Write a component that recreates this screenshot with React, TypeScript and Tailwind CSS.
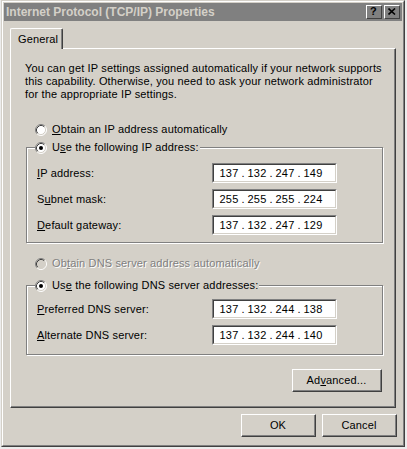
import React from "react";

function U({ children }: { children: React.ReactNode }) {
  return <span className="underline underline-offset-[1px] decoration-1">{children}</span>;
}

function Radio({ checked = false, disabled = false }: { checked?: boolean; disabled?: boolean }) {
  return (
    <svg width="12" height="12" viewBox="0 0 12 12" className="shrink-0">
      <circle cx="6" cy="6" r="5" fill={disabled ? "#d4d0c8" : "#fff"} />
      <path d="M2.11 9.89 A5.5 5.5 0 0 1 9.89 2.11" stroke="#808080" fill="none" />
      <path d="M9.89 2.11 A5.5 5.5 0 0 1 2.11 9.89" stroke="#fff" fill="none" />
      <path d="M2.82 9.18 A4.5 4.5 0 0 1 9.18 2.82" stroke="#404040" fill="none" />
      <path d="M9.18 2.82 A4.5 4.5 0 0 1 2.82 9.18" stroke="#d4d0c8" fill="none" />
      {checked && <circle cx="6" cy="6" r="2" fill="#000" />}
    </svg>
  );
}

function IpField({ value }: { value: string }) {
  const parts = value.split(".");
  return (
    <div className="w-[125px] h-[20px] border border-t-[#808080] border-l-[#808080] border-r-white border-b-white">
      <div className="h-full border border-t-[#404040] border-l-[#404040] border-r-[#d4d0c8] border-b-[#d4d0c8] bg-white flex items-center pl-[5px]">
        {parts.map((p, i) => (
          <React.Fragment key={i}>
            {i > 0 && <span className="w-[8px] text-center">.</span>}
            <span className="w-[20px] text-center">{p}</span>
          </React.Fragment>
        ))}
      </div>
    </div>
  );
}

function Button({ children, className = "" }: { children: React.ReactNode; className?: string }) {
  return (
    <div className={`border border-t-white border-l-white border-r-[#404040] border-b-[#404040] ${className}`}>
      <div className="h-full border-r border-b border-[#808080] flex items-center justify-center">{children}</div>
    </div>
  );
}

function Row({ label, value }: { label: React.ReactNode; value: string }) {
  return (
    <div className="flex items-center h-[20px]">
      <div className="w-[175px]">{label}</div>
      <IpField value={value} />
    </div>
  );
}

function Group({ legend, children, className = "" }: { legend: React.ReactNode; children: React.ReactNode; className?: string }) {
  return (
    <div className={`relative ml-[15px] w-[357px] border border-[#808080] shadow-[inset_1px_1px_0_#fff,1px_1px_0_#fff] pl-[10px] ${className}`}>
      <div className="absolute -top-[7px] left-[8px] h-[13px] flex items-center gap-[5px] bg-[#d4d0c8] pr-[1px]">
        {legend}
      </div>
      <div className="flex flex-col gap-[6px]">{children}</div>
    </div>
  );
}

export default function App() {
  return (
    <div className="w-[407px] h-[449px] bg-[#ececec] pl-[1px] overflow-hidden font-['Liberation_Sans',Arial,sans-serif] text-[11px] tracking-[0.15px] text-black leading-[13px]">
      <div className="w-[404px] h-[447px] border border-t-[#d4d0c8] border-l-[#d4d0c8] border-r-[#404040] border-b-[#404040]">
        <div className="h-full border border-t-white border-l-white border-r-[#808080] border-b-[#808080] bg-[#d4d0c8] p-[1px] flex flex-col">
          {/* title bar */}
          <div className="h-[18px] bg-[#808080] flex items-center pl-[2px] pr-[2px]">
            <span className="flex-1 font-bold text-[12px] tracking-normal text-[#d4d0c8]">Internet Protocol (TCP/IP) Properties</span>
            <Button className="w-[16px] h-[14px]">
              <span className="font-bold text-[11px] leading-none">?</span>
            </Button>
            <Button className="w-[16px] h-[14px] ml-[2px]">
              <svg width="8" height="7" viewBox="0 0 8 7">
                <path d="M0.5 0.5 L7 6.5 M7 0.5 L0.5 6.5" stroke="#000" strokeWidth="1.6" />
              </svg>
            </Button>
          </div>

          {/* tab */}
          <div className="mt-[7px] ml-[6px] relative z-10 -mb-px">
            <div className="w-[53px] h-[21px] border-t border-l border-r border-t-white border-l-white border-r-[#404040] rounded-tl-[2px] rounded-tr-[2px] bg-[#d4d0c8]">
              <div className="h-full border-r border-[#808080] pl-[7px] pt-[4px]">General</div>
            </div>
          </div>

          {/* panel */}
          <div className="ml-[6px] w-[386px] h-[360px] border border-t-white border-l-white border-r-[#404040] border-b-[#404040]">
            <div className="h-full border-r border-b border-[#808080] flex flex-col">
              <p className="mt-[13px] ml-[14px]">
                You can get IP settings assigned automatically if your network supports
                <br />
                this capability. Otherwise, you need to ask your network administrator
                <br />
                for the appropriate IP settings.
              </p>

              <div className="mt-[22px] ml-[24px] h-[13px] flex items-center gap-[5px]">
                <Radio />
                <span>
                  <U>O</U>btain an IP address automatically
                </span>
              </div>

              <Group
                className="mt-[11px] pt-[15px] pb-[7px]"
                legend={
                  <>
                    <Radio checked />
                    <span>
                      U<U>s</U>e the following IP address:
                    </span>
                  </>
                }
              >
                <Row label={<><U>I</U>P address:</>} value="137.132.247.149" />
                <Row label={<>S<U>u</U>bnet mask:</>} value="255.255.255.224" />
                <Row label={<><U>D</U>efault gateway:</>} value="137.132.247.129" />
              </Group>

              <div className="mt-[14px] ml-[24px] h-[13px] flex items-center gap-[5px]">
                <Radio disabled />
                <span className="text-[#808080] [text-shadow:1px_1px_0_#fff]">
                  Ob<U>t</U>ain DNS server address automatically
                </span>
              </div>

              <Group
                className="mt-[15px] pt-[13px] pb-[9px]"
                legend={
                  <>
                    <Radio checked />
                    <span>
                      Us<U>e</U> the following DNS server addresses:
                    </span>
                  </>
                }
              >
                <Row label={<><U>P</U>referred DNS server:</>} value="137.132.244.138" />
                <Row label={<><U>A</U>lternate DNS server:</>} value="137.132.244.140" />
              </Group>

              <Button className="mt-[14px] ml-[281px] w-[90px] h-[23px]">
                <span>
                  Ad<U>v</U>anced...
                </span>
              </Button>
            </div>
          </div>

          {/* dialog buttons */}
          <div className="mt-[6px] flex justify-end gap-[6px] pr-[5px]">
            <Button className="w-[75px] h-[23px]">OK</Button>
            <Button className="w-[75px] h-[23px]">Cancel</Button>
          </div>
        </div>
      </div>
    </div>
  );
}
